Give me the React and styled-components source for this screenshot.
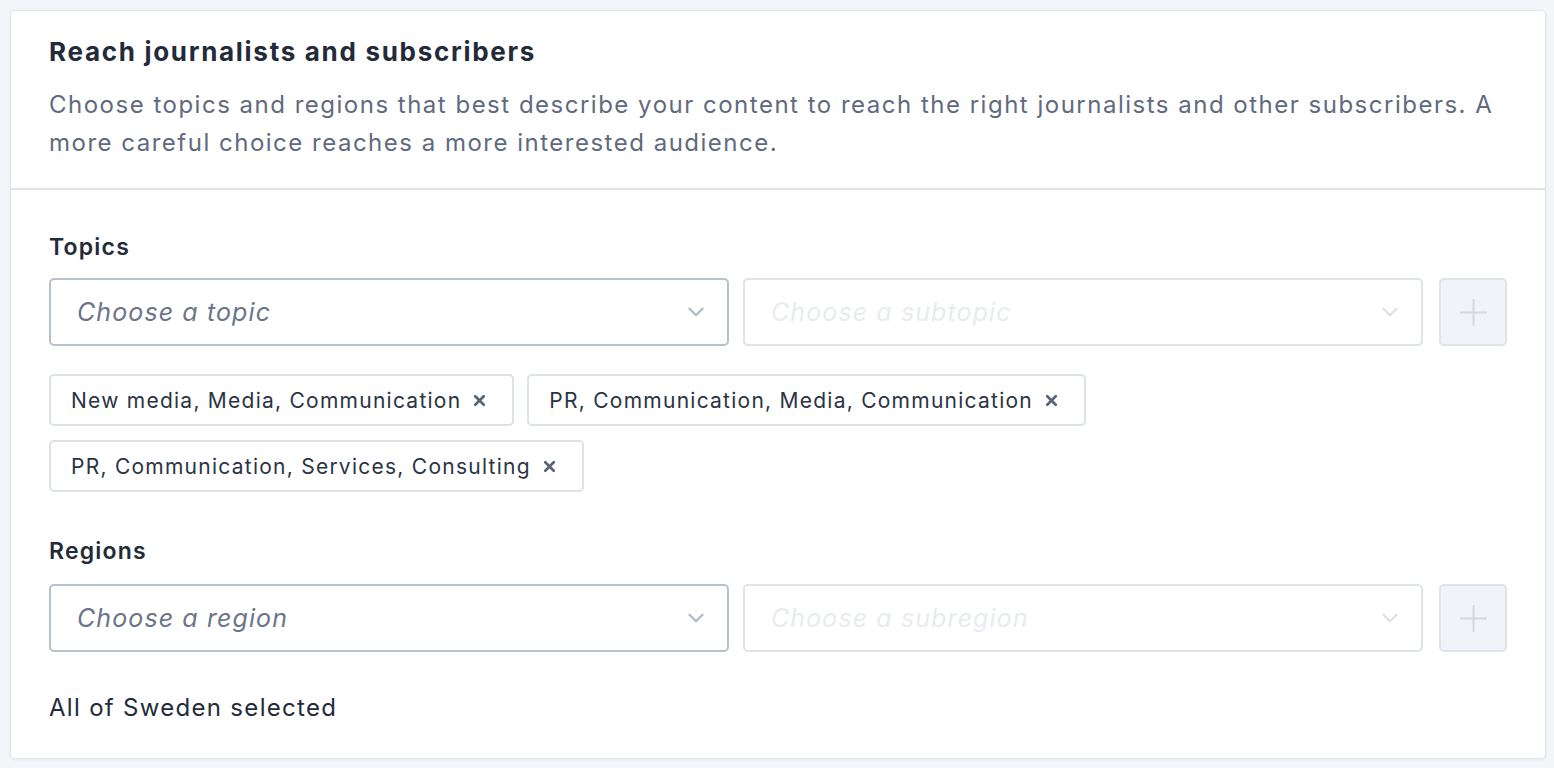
import React from 'react';
import styled, { createGlobalStyle } from 'styled-components';
import { ChevronDown, Plus, X } from 'lucide-react';

const GlobalStyle = createGlobalStyle`
  html, body {
    margin: 0;
    padding: 0;
    background: #f4f5f8;
    font-family: 'Inter', 'Liberation Sans', sans-serif;
    color: #232b3a;
  }
`;

const Page = styled.div`
  padding: 10px 8px 8px 10px;
`;

const Card = styled.section`
  background: #ffffff;
  border: 1px solid #e3e6ec;
  border-radius: 5px;
  box-shadow: 0 1px 3px rgba(30, 40, 70, 0.06);
`;

const Header = styled.header`
  padding: 25px 38px 26px;
  border-bottom: 2px solid #dfe3ea;
`;

const Title = styled.h2`
  margin: 0 0 18px;
  font-size: 26px;
  line-height: 32px;
  font-weight: 700;
  letter-spacing: 1.7px;
  color: #232b3a;
`;

const Description = styled.p`
  margin: 0;
  font-size: 24px;
  line-height: 38px;
  color: #5f6a7e;
  letter-spacing: 1.5px;
`;

const Body = styled.div`
  padding: 43px 38px 35px;
`;

const Section = styled.div`
  & + & {
    margin-top: 45px;
  }
`;

const Label = styled.div`
  font-size: 23px;
  line-height: 28px;
  font-weight: 600;
  letter-spacing: 1.2px;
  margin-bottom: ${(p) => p.$gap || 17}px;
  color: #232b3a;
`;

const SelectRow = styled.div`
  display: flex;
  align-items: center;
`;

const Select = styled.div`
  flex: 0 0 680px;
  height: 68px;
  box-sizing: border-box;
  margin-right: ${(p) => (p.$disabled ? 16 : 14)}px;
  border: 2px solid ${(p) => (p.$disabled ? '#dfe3ea' : '#b9c1cd')};
  border-radius: 5px;
  display: flex;
  align-items: center;
  justify-content: space-between;
  padding: 0 18px 0 26px;
  font-size: 25px;
  font-style: italic;
  letter-spacing: 1.1px;
  color: ${(p) => (p.$disabled ? '#e8ebf0' : '#6b7588')};
  background: #fff;

  svg {
    color: ${(p) => (p.$disabled ? '#dde1e8' : '#b3bbc7')};
  }
`;

const AddButton = styled.button`
  width: 68px;
  height: 68px;
  box-sizing: border-box;
  border: 2px solid #dfe3ea;
  border-radius: 5px;
  background: #f1f3f8;
  display: flex;
  align-items: center;
  justify-content: center;
  color: #d3d7df;
  padding: 0;
`;

const Chips = styled.div`
  display: flex;
  flex-wrap: wrap;
  gap: 14px 13px;
  margin-top: 28px;
`;

const Chip = styled.div`
  display: flex;
  align-items: center;
  height: 52px;
  box-sizing: border-box;
  padding: 0 24px 0 20px;
  border: 2px solid #dde1e8;
  border-radius: 5px;
  font-size: 21px;
  letter-spacing: 1.25px;
  color: #2b3344;

  svg {
    margin-left: 10px;
    color: #5a6477;
  }
`;

const Note = styled.div`
  margin-top: 41px;
  font-size: 24px;
  line-height: 30px;
  letter-spacing: 1.3px;
  color: #232b3a;
`;

const topics = [
  'New media, Media, Communication',
  'PR, Communication, Media, Communication',
  'PR, Communication, Services, Consulting',
];

function Picker({ main, sub }) {
  return (
    <SelectRow>
      <Select>
        <span>{main}</span>
        <ChevronDown size={26} strokeWidth={2.2} />
      </Select>
      <Select $disabled>
        <span>{sub}</span>
        <ChevronDown size={26} strokeWidth={2.2} />
      </Select>
      <AddButton>
        <Plus size={43} strokeWidth={1.1} />
      </AddButton>
    </SelectRow>
  );
}

export default function App() {
  return (
    <Page>
      <GlobalStyle />
      <Card>
        <Header>
          <Title>Reach journalists and subscribers</Title>
          <Description>
            Choose topics and regions that best describe your content to reach the right journalists
            and other subscribers. A more careful choice reaches a more interested audience.
          </Description>
        </Header>
        <Body>
          <Section>
            <Label>Topics</Label>
            <Picker main="Choose a topic" sub="Choose a subtopic" />
            <Chips>
              {topics.map((t) => (
                <Chip key={t}>
                  {t}
                  <X size={17} strokeWidth={3.8} />
                </Chip>
              ))}
            </Chips>
          </Section>
          <Section>
            <Label $gap={19}>Regions</Label>
            <Picker main="Choose a region" sub="Choose a subregion" />
            <Note>All of Sweden selected</Note>
          </Section>
        </Body>
      </Card>
    </Page>
  );
}
